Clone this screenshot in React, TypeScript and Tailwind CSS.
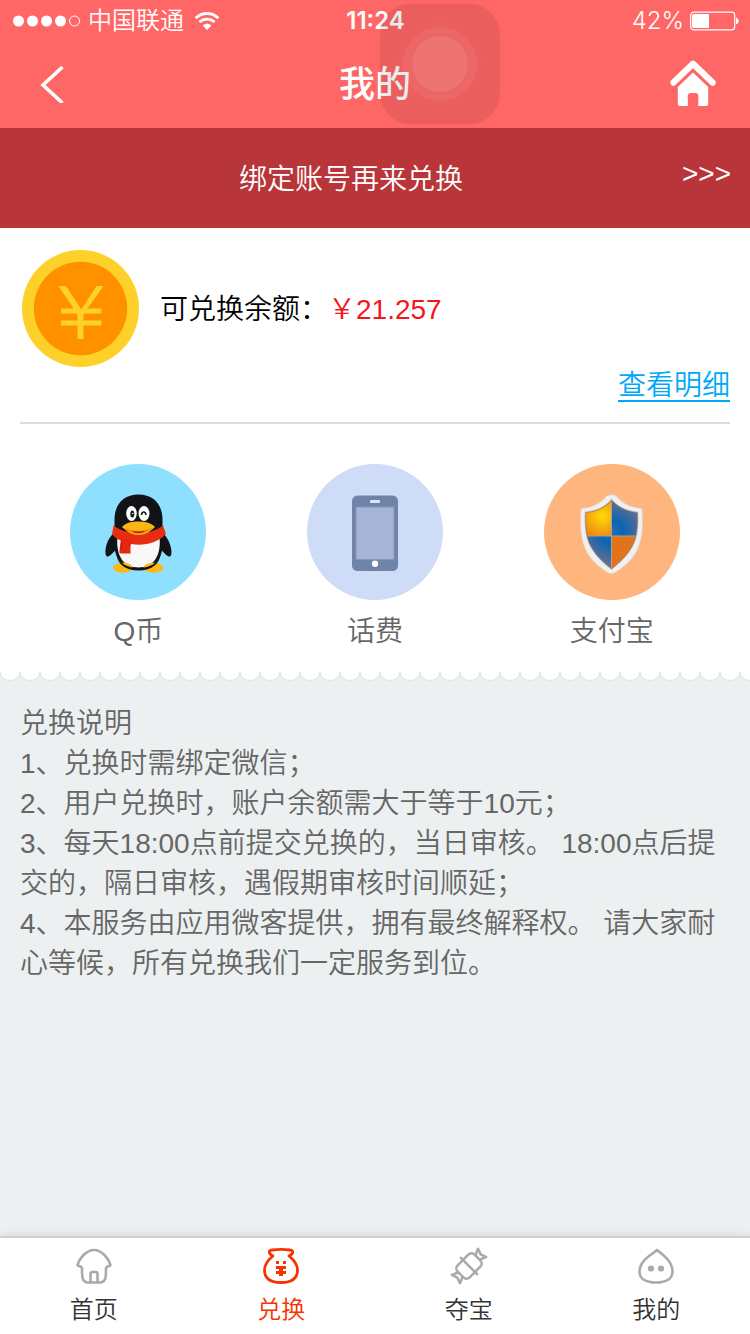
import type { ReactNode } from "react";

const sans = "font-['Liberation_Sans','Noto_Sans_CJK_SC',sans-serif]";
const system = "font-['Inter','Noto_Sans_CJK_SC',sans-serif]";

function StatusBar() {
  return (
    <div className={`${system} grid h-10 grid-cols-3 items-center pt-[2px] pr-[11px] pl-3 text-2xl leading-9`}>
      <div className="flex items-center gap-2">
        <svg width="68" height="12" viewBox="0 0 68 12" fill="#fff" aria-hidden="true">
          <circle cx="6.5" cy="6" r="5.5" />
          <circle cx="20.5" cy="6" r="5.5" />
          <circle cx="34.5" cy="6" r="5.5" />
          <circle cx="48.5" cy="6" r="5.5" />
          <circle cx="62.5" cy="6" r="5" fill="none" stroke="#fff" />
        </svg>
        <span className="font-[350] whitespace-nowrap">中国联通</span>
        <svg width="28" height="20" viewBox="-2 0 28 20" fill="none" stroke="#fff" strokeWidth="2.8" aria-hidden="true">
          <path d="M1.6 7.2C8 .9 18 .9 24.4 7.2" />
          <path d="M5.4 11.1c4.2-4.1 11-4.1 15.2 0" />
          <path d="M13 19l-4.3-4.5c2.4-2.2 6.200-2.200 8.600 0z" fill="#fff" stroke="none" />
        </svg>
      </div>
      <time className="text-center font-semibold">11:24</time>
      <div className="flex items-center justify-end gap-[6px]">
        <span>42%</span>
        <svg width="49" height="20" viewBox="0 0 49 20" aria-hidden="true">
          <rect x=".7" y="1.200" width="44" height="17.600" rx="3" fill="none" stroke="#fff" strokeWidth="1.2" />
          <path d="M4 3h15v14H4a2 2 0 0 1-2-2V5a2 2 0 0 1 2-2z" fill="#fff" />
          <path d="M46.500 7a3.500 3.500 0 0 1 0 6z" fill="#fff" stroke="#fff" />
        </svg>
      </div>
    </div>
  );
}

function AssistiveTouch() {
  return (
    <button
      type="button"
      aria-label="AssistiveTouch"
      className="absolute top-1 left-1/2 ml-[5px] flex size-[120px] items-center justify-center rounded-[30px] bg-black/8"
    >
      <span className="flex size-[88px] items-center justify-center rounded-full bg-white/[0.01]">
        <span className="flex size-[74px] items-center justify-center rounded-full bg-white/5">
          <span className="size-[58px] rounded-full border border-[#e96465] bg-white/8" />
        </span>
      </span>
    </button>
  );
}

function Coin() {
  return (
    <svg width="117" height="117" viewBox="0 0 117 117" className="shrink-0" aria-hidden="true">
      <circle cx="58.500" cy="58.500" r="58.500" fill="#fdd12a" />
      <circle cx="58.500" cy="58.500" r="46.700" fill="#ff9000" />
      <path
        d="M36.500 36h7.500L59.300 59.500 74.500 36H81.500L65.500 58.500h14v5h-17l-1 2v5h18v5h-18v13.500h-6V75.500H39v-5h16.500v-5l-1-2H39v-5h12.500z"
        fill="#fdd12a"
      />
    </svg>
  );
}

function Penguin() {
  return (
    <svg width="136" height="136" viewBox="0 0 136 136" aria-hidden="true">
      <circle cx="68" cy="68" r="68" fill="#8fdfff" />
      <path d="M45 68c-8 6-11 18-9 23.500 1.500 3 5.500-1 9-5zM92 68c7 6 11 18 9 23.500-1.500 3-5.500-1-9-5z" fill="#121317" />
      <path d="M68.500 30.500c-16 0-24 11-24 25 0 7 0 10-.5 17-2 19 8 33 24.500 33s26.500-14 24.500-33c-.5-7-.5-10-.5-17 0-14-8-25-24-25z" fill="#121317" />
      <path d="M47.500 72c-2 20 6 31.500 21 31.500s23-11.500 21-31.500z" fill="#f8f8f8" />
      <ellipse cx="53" cy="103.700" rx="10" ry="5" fill="#fdb813" />
      <ellipse cx="83.500" cy="103.700" rx="10" ry="5" fill="#fdb813" />
      <path d="M46 88c3 11 10 16 22.500 16S88 99 91 88c-1 12-9 18.500-22.500 18.500S47 100 46 88z" fill="#121317" />
      <ellipse cx="61.500" cy="49.500" rx="5.300" ry="7.500" fill="#fff" />
      <ellipse cx="74" cy="49.500" rx="5.500" ry="7.500" fill="#fff" />
      <ellipse cx="62.300" cy="50" rx="2" ry="3.600" fill="#181818" />
      <circle cx="62.800" cy="49.500" r=".7" fill="#fff" />
      <path d="M71.500 51c.5-4 4-4 4.500 0" fill="none" stroke="#181818" strokeWidth="1.700" />
      <path d="M43.500 61.500c13 10 37 10 49.500 0l3 8.500c-13 14-40 14.500-54 .5z" fill="#e92d12" />
      <path d="M51 74l9.500 2v13.500H51c-1.500 0-2-1-1.500-2.500z" fill="#e62811" />
      <path d="M51.500 78l-.5 8M60 77.500v4" stroke="#b91d0b" strokeWidth="1" />
      <path d="M52 63c4-4.500 10-5.500 16-5.500s13 1 17 5.500c-5 5-10 8-16.500 8S57 68 52 63z" fill="#fcb514" />
      <path d="M54 63.500c8 4.500 20 4.500 29 0-3 3.500-8 6.500-14.500 6.500s-12-3-14.500-6.500z" fill="#f28b0c" />
      <path d="M62 66.700c4 1 8 1 13 0-2 3-11 3-13 0z" fill="#9f2413" />
    </svg>
  );
}

function Phone() {
  return (
    <svg width="136" height="136" viewBox="0 0 136 136" aria-hidden="true">
      <circle cx="68" cy="68" r="68" fill="#cfdcf8" />
      <rect x="45" y="31.500" width="46" height="75.500" rx="5.500" fill="#7083a8" />
      <rect x="49" y="43" width="38" height="52.500" fill="#a6b4d5" stroke="#8294b8" />
      <rect x="63" y="36" width="10" height="3" rx="1" fill="#dce5f5" />
      <circle cx="68" cy="99.800" r="3.200" fill="#fff" />
      <path d="M62 109.500h12" stroke="#e3dff2" />
    </svg>
  );
}

function Shield() {
  return (
    <svg width="136" height="136" viewBox="0 0 136 136" aria-hidden="true">
      <defs>
        <radialGradient id="gold" gradientUnits="userSpaceOnUse" cx="58" cy="52" r="24">
          <stop offset="0" stopColor="#ffdc08" />
          <stop offset="1" stopColor="#ed7f12" />
        </radialGradient>
        <radialGradient id="blue" gradientUnits="userSpaceOnUse" cx="68" cy="68" r="36">
          <stop offset="0" stopColor="#2670b8" />
          <stop offset=".3" stopColor="#0b64b2" />
          <stop offset="1" stopColor="#74708b" />
        </radialGradient>
        <clipPath id="shield">
          <path d="M67.500 36c6 7 16 11.500 26 12.500 1 25-2.500 38-26 56.500-23.500-18.500-27-31.500-26-56.500 10-1 20-5.500 26-12.500z" />
        </clipPath>
      </defs>
      <circle cx="68" cy="68" r="68" fill="#ffb57e" />
      <path
        d="M63 31.500q4.500-1.500 9 0c5.500 7.500 15 12.200 26 13 2.500 34-3.500 49-26.500 64q-4 2.500-8 0C40.500 93.500 34.500 78.500 37 44.500c11-.8 20.500-5.500 26-13z"
        fill="#f0f0f1"
        stroke="#e5cbb8"
        strokeWidth=".7"
      />
      <g clipPath="url(#shield)">
        <path d="M38 32h29.500v40H38z" fill="url(#gold)" />
        <path d="M67.500 32H98v40H67.500zM38 72h29.500v36H38z" fill="url(#blue)" />
        <path d="M67.500 72H98v36H67.500z" fill="#e37319" />
        <path d="M67.500 34v72M39 72h58" stroke="#a6a49a" />
      </g>
      <path d="M67.500 36c6 7 16 11.500 26 12.500 1 25-2.500 38-26 56.500-23.500-18.500-27-31.500-26-56.500 10-1 20-5.500 26-12.500z" fill="none" stroke="#8a7268" strokeOpacity=".5" strokeWidth="1.500" />
    </svg>
  );
}

function ScallopEdge() {
  return (
    <svg width="100%" height="12" className="block" aria-hidden="true">
      <defs>
        <pattern id="scallop" width="20" height="12" patternUnits="userSpaceOnUse">
          <path d="M0 0v1.500a10 9 0 0 0 20 0V0" fill="#fff" stroke="#e2e2e0" strokeWidth="1" />
          <path d="M0 0h20v2H0z" fill="#fff" />
        </pattern>
      </defs>
      <rect width="100%" height="12" fill="url(#scallop)" />
    </svg>
  );
}

function Option({ icon, label }: { icon: ReactNode; label: string }) {
  return (
    <a href="#exchange" className="flex flex-col items-center gap-3">
      {icon}
      <span className="leading-10">{label}</span>
    </a>
  );
}

function Tab({ label, active, children }: { label: string; active?: boolean; children: ReactNode }) {
  return (
    <a href="#tab" className={`flex flex-col items-center gap-2 ${active ? "text-[#f83200]" : "text-[#333]"}`}>
      <svg
        width="36"
        height="36"
        viewBox="0 0 36 36"
        fill="none"
        stroke={active ? "#f83200" : "#aaa"}
        strokeWidth="2.600"
        strokeLinejoin="round"
        strokeLinecap="round"
        className="overflow-visible"
        aria-hidden="true"
      >
        {children}
      </svg>
      <span>{label}</span>
    </a>
  );
}

export default function App() {
  return (
    <div className={`${sans} flex min-h-screen flex-col bg-[#ecf0f1] text-[28px] font-[350] text-[#666]`}>
      <header className="relative bg-[#ff6766] text-white">
        <StatusBar />
        <div className="flex h-[88px] items-center justify-between px-8">
          <a href="#back" aria-label="返回" className="flex w-12 justify-start pl-2">
            <svg width="24" height="38" viewBox="0 0 24 38" fill="none" stroke="#fff" strokeWidth="3.600" aria-hidden="true">
              <path d="M22.500 2L3 20 22.500 38" />
            </svg>
          </a>
          <h1 className="pt-[2px] text-4xl font-medium">我的</h1>
          <a href="#home" aria-label="首页" className="flex w-12 justify-end">
            <svg width="48" height="48" viewBox="1 1 48 48" fill="#fff" aria-hidden="true">
              <path d="M4.500 23.500L24 4.800 43.500 23.500" fill="none" stroke="#fff" strokeWidth="6.400" strokeLinecap="round" strokeLinejoin="round" />
              <path d="M24 13.500L39.200 28v17q0 2-2 2H29.300V37q0-3-3-3h-4.500q-3 0-3 3v10h-8q-2 0-2-2V28z" />
            </svg>
          </a>
        </div>
        <AssistiveTouch />
      </header>

      <main className="flex-1">
        <a href="#bind" className="grid h-[100px] grid-cols-[1fr_48px] items-center bg-[#b83539] px-5 text-white">
          <span className="pt-1 text-center">绑定账号再来兑换</span>
          <span className="pb-2 text-right">&gt;&gt;&gt;</span>
        </a>

        <section className="bg-white px-5 pt-[22px]">
          <div className="flex items-center gap-[21px] pl-[2px] text-black">
            <Coin />
            <p className="pt-[2px]">
              可兑换余额：<span className="text-[#f4161b]">￥21.257</span>
            </p>
          </div>
          <div className="flex justify-end border-b-2 border-[#ddd] pb-5">
            <a href="#details" className="border-b-2 border-[#00a8f8] pt-1 leading-[29px] text-[#00a8f8]">
              查看明细
            </a>
          </div>
          <div className="grid grid-cols-3 pt-10 pb-[18px]">
            <Option icon={<Penguin />} label="Q币" />
            <Option icon={<Phone />} label="话费" />
            <Option icon={<Shield />} label="支付宝" />
          </div>
        </section>
        <ScallopEdge />

        <section className="px-5 pt-[22px] pb-5 leading-10">
          <h2>兑换说明</h2>
          <ol>
            <li>1、兑换时需绑定微信；</li>
            <li>2、用户兑换时，账户余额需大于等于10元；</li>
            <li>3、每天18:00点前提交兑换的，当日审核。 18:00点后提交的，隔日审核，遇假期审核时间顺延；</li>
            <li>4、本服务由应用微客提供，拥有最终解释权。 请大家耐心等候，所有兑换我们一定服务到位。</li>
          </ol>
        </section>
      </main>

      <nav className="sticky bottom-0 grid h-[98px] grid-cols-4 border-t-2 border-[#cfcfcf] bg-white pt-[10px] text-2xl leading-9 shadow-[0_-2px_8px_rgba(0,0,0,0.08)]">
        <Tab label="首页">
          <path d="M6 20c-1-3-4-1-4.500-3C3 11 10 2 18 2s15 9 16.500 15c-.5 2-3.500 0-4.500 3 0 9 0 13.500-5 14.500H11C6 33.500 6 29 6 20zM14.500 34v-8q0-2 2-2h3q2 0 2 2v8" />
        </Tab>
        <Tab label="兑换" active>
          <path d="M10 8C5 5.500 5.500 2 9 2c5-.8 13-.8 18 0 3.500 0 4 3.500-1 6C31 12 34.500 17 34.500 22c0 9-7 12.500-16.500 12.500S1.500 31 1.500 22c0-5 3.500-10 8.500-14z" strokeWidth="2.800" />
          <path d="M13 13h3v3h-3zM20 13h3v3h-3zM13 18h10v3h-3v2h3v3h-3v2h-4v-2h-3v-3h3v-2h-3z" fill="#f83200" stroke="none" />
        </Tab>
        <Tab label="夺宝">
          <g transform="rotate(-45 18 18)" strokeWidth="2.500">
            <rect x="6" y="9.500" width="24" height="17" rx="4.500" />
            <path d="M18 6.500v23M6 15L-.5 12.200l2 5.800-2 5.800L6 21M30 15l6.500-2.800-2 5.800 2 5.800L30 21" />
          </g>
        </Tab>
        <Tab label="我的">
          <path d="M19 2C15 6 1.500 12 1.500 23.500c0 7 6 11 16.500 11s16.500-4 16.500-11C34.500 12 23 6 19 2z" />
          <circle cx="13" cy="20.500" r="3.100" fill="#aaa" stroke="none" />
          <circle cx="23" cy="20.500" r="3.100" fill="#aaa" stroke="none" />
        </Tab>
      </nav>
    </div>
  );
}
